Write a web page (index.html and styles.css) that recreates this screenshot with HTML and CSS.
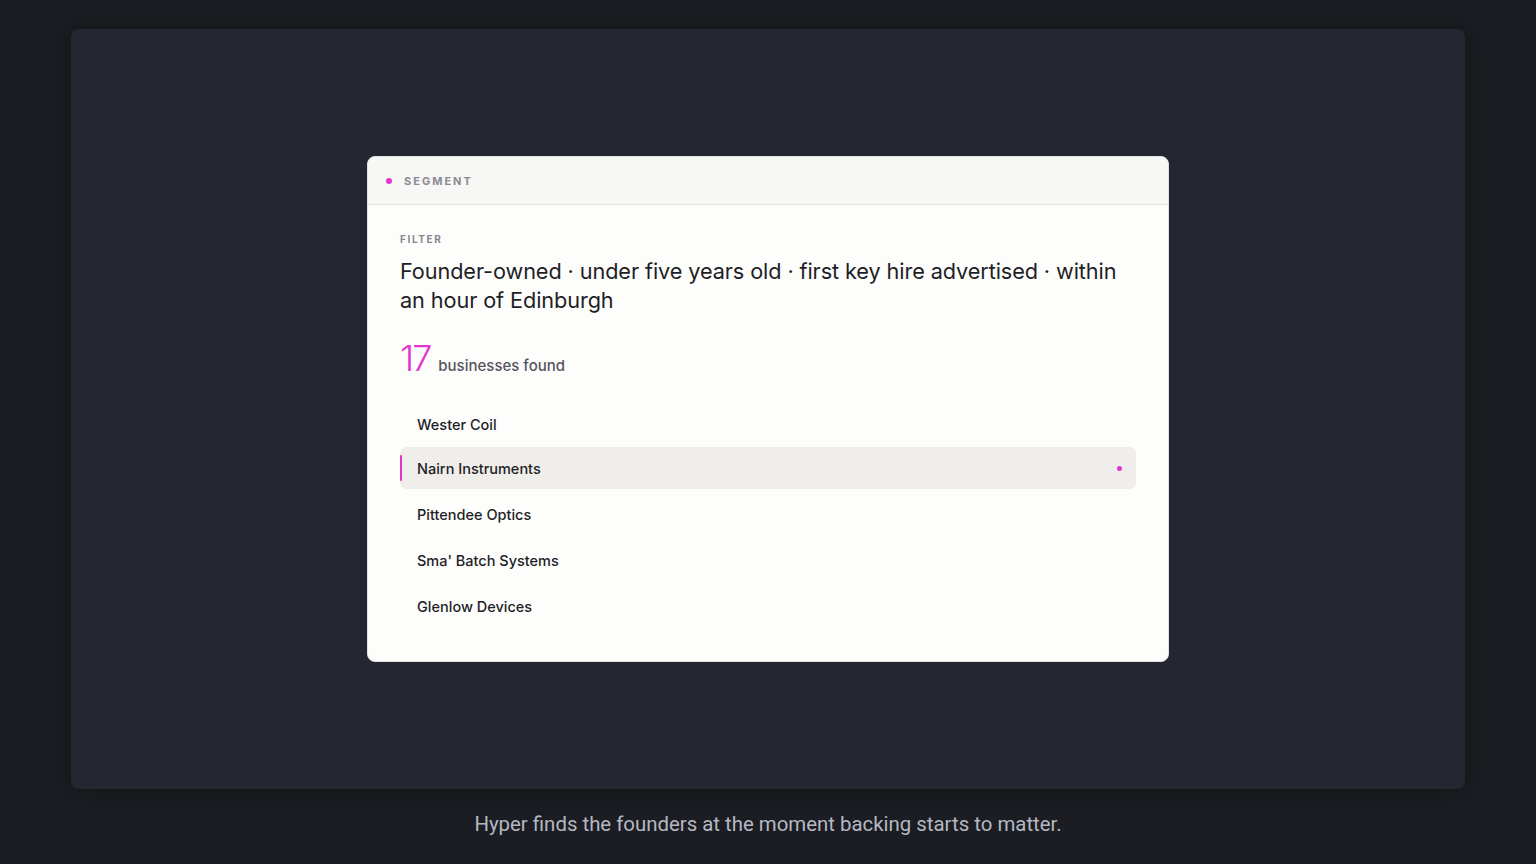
FILE: index.html
```html
<!DOCTYPE html>
<html lang="en">
<head>
<meta charset="utf-8">
<title>Hyper — Segment</title>
<link rel="stylesheet" href="styles.css">
</head>
<body>
<main class="stage">
  <section class="frame">
    <article class="card">
      <header class="card-head">
        <span class="dot"></span>
        <span class="eyebrow">SEGMENT</span>
      </header>
      <div class="card-body">
        <div class="label">FILTER</div>
        <h1 class="filter">Founder-owned · under five years old · first key hire advertised · within an hour of Edinburgh</h1>
        <div class="count">
          <span class="num">17</span>
          <span class="count-label">businesses found</span>
        </div>
        <ul class="list">
          <li class="row first">Wester Coil</li>
          <li class="row active">Nairn Instruments<span class="row-dot"></span></li>
          <li class="row">Pittendee Optics</li>
          <li class="row">Sma' Batch Systems</li>
          <li class="row">Glenlow Devices</li>
        </ul>
      </div>
    </article>
  </section>
  <p class="caption">Hyper finds the founders at the moment backing starts to matter.</p>
</main>
</body>
</html>
```
FILE: styles.css
```css
* { box-sizing: border-box; }
html, body { margin: 0; padding: 0; }
body {
  background: #1b1d22;
  width: 1536px;
  height: 864px;
  overflow: hidden;
  font-family: "Inter", "Noto Sans", sans-serif;
}
.stage {
  display: flex;
  flex-direction: column;
  align-items: center;
  padding-top: 29px;
}
.frame {
  width: 1394px;
  height: 760px;
  background: #242731;
  border-radius: 8px;
  box-shadow: 0 0 24px rgba(0,0,0,0.35);
  display: flex;
  align-items: center;
  justify-content: center;
}
.card {
  width: 802px;
  background: #fdfdfb;
  border: 1px solid #e2e2df;
  border-radius: 8px;
  overflow: hidden;
}
.card-head {
  height: 48px;
  background: #f7f7f5;
  border-bottom: 1px solid #e4e4e1;
  display: flex;
  align-items: center;
  padding-left: 18px;
  gap: 12px;
}
.dot {
  width: 6px;
  height: 6px;
  border-radius: 50%;
  background: #e234cf;
}
.eyebrow {
  font-size: 11px;
  font-weight: 700;
  letter-spacing: 2px;
  color: #8b8b92;
}
.card-body {
  padding: 28px 32px 34px 32px;
}
.label {
  font-size: 10px;
  font-weight: 700;
  letter-spacing: 1.6px;
  color: #86868e;
  line-height: 12px;
}
.filter {
  margin: 12px 0 0 0;
  font-size: 21.7px;
  font-weight: 400;
  line-height: 29px;
  color: #1e1e26;
  letter-spacing: -0.1px;
}
.count {
  display: flex;
  align-items: baseline;
  gap: 8px;
  margin-top: 25px;
}
.num {
  font-size: 36px;
  font-weight: 300;
  color: #e234cf;
  line-height: 36px;
  letter-spacing: -2px;
}
.count-label {
  font-size: 15px;
  font-weight: 500;
  color: #55555f;
}
.list {
  list-style: none;
  margin: 25px 0 0 0;
  padding: 0;
  display: flex;
  flex-direction: column;
  gap: 4px;
}
.row {
  height: 42px;
  display: flex;
  align-items: center;
  padding-left: 17px;
  padding-right: 14px;
  font-size: 14.5px;
  font-weight: 500;
  color: #1e1e26;
  border-radius: 6px;
  position: relative;
}
.row.first {
  padding-top: 4px;
}
.row.active {
  background: #f0eeea;
  justify-content: space-between;
}
.row.active::before {
  content: "";
  position: absolute;
  left: 0;
  top: 8px;
  bottom: 8px;
  width: 2px;
  background: #e234cf;
  border-radius: 1px;
}
.row-dot {
  width: 5px;
  height: 5px;
  border-radius: 50%;
  background: #e234cf;
}
.caption {
  margin: 23px 0 0 0;
  font-family: "Roboto", sans-serif;
  font-size: 20.4px;
  color: #b5b8c2;
  line-height: 24px;
}
```
